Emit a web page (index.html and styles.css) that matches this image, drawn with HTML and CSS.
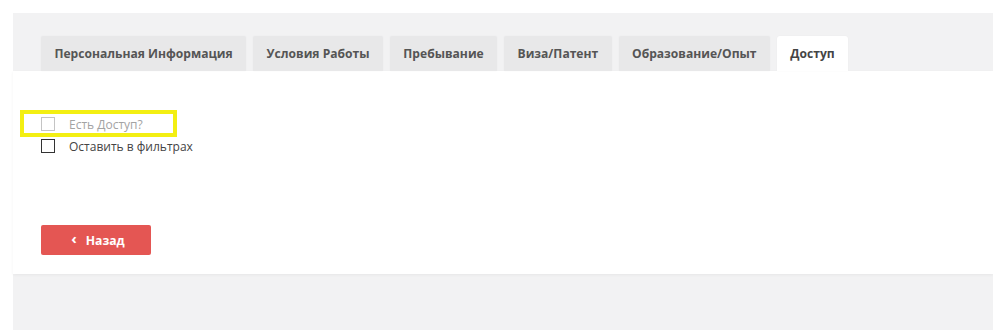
FILE: index.html
```html
<!DOCTYPE html>
<html lang="ru">
<head>
  <meta charset="UTF-8">
  <title>Доступ</title>
  <link rel="stylesheet" href="styles.css">
</head>
<body>
  <div class="page">
    <!-- Tabs -->
    <nav class="tabs">
      <span class="tab">Персональная Информация</span>
      <span class="tab">Условия Работы</span>
      <span class="tab">Пребывание</span>
      <span class="tab">Виза/Патент</span>
      <span class="tab">Образование/Опыт</span>
      <span class="tab active">Доступ</span>
    </nav>
    <!-- Access panel -->
    <section class="panel">
      <div class="checks">
        <label class="check highlight"><span class="box light"></span><span class="muted">Есть Доступ?</span></label>
        <label class="check"><span class="box"></span><span>Оставить в фильтрах</span></label>
      </div>
      <button class="btn-back"><span class="chev">&#8249;</span>Назад</button>
    </section>
  </div>
</body>
</html>
```

FILE: styles.css
```css
/* General */
body {
  margin: 0;
  background: #fff;
  font-family: "Open Sans", Arial, sans-serif;
  color: #555;
}

.page {
  margin: 13px 0 0 13px;
  background: #f2f2f3;
  height: 317px;
}

/* Tabs */
.tabs {
  display: flex;
  gap: 7px;
  padding: 23px 0 0 28px;
}

.tab {
  height: 35px;
  line-height: 35px;
  padding: 0 13.4px;
  background: #e8e8e9;
  font-size: 12.1px;
  font-weight: bold;
  color: #555;
  border-radius: 2px 2px 0 0;
  box-shadow: 0 0 2px rgba(0, 0, 0, 0.04);
}

.tab.active {
  background: #fff;
  color: #444;
  border-radius: 3px 3px 0 0;
}

/* Panel */
.panel {
  background: #fff;
  padding: 39px 28px 19px;
  box-shadow: 0 1px 3px rgba(0, 0, 0, 0.05);
}

.checks {
  display: flex;
  flex-direction: column;
  gap: 2px;
  font-size: 12px;
}

.check {
  display: flex;
  align-items: center;
  gap: 14px;
  height: 14px;
  color: #444;
}

.check.highlight {
  box-sizing: border-box;
  width: 157px;
  height: 27px;
  margin-left: -21px;
  padding: 1px 0 0 17px;
  border: 4px solid #f3ef12;
}

.box {
  width: 12px;
  height: 12px;
  border: 1px solid #333;
  background: #fff;
}

.box.light {
  border-color: #c4c4c4;
}

.muted {
  color: #a3a3a3;
}

/* Back button */
.btn-back {
  display: flex;
  align-items: center;
  justify-content: center;
  gap: 9px;
  margin-top: 72px;
  width: 110px;
  height: 30px;
  padding: 0 0 0 4px;
  background: #e45653;
  color: #fff;
  border: none;
  border-radius: 2px;
  font-family: "Open Sans", Arial, sans-serif;
  font-size: 12.2px;
  font-weight: bold;
}

.chev {
  font-size: 15px;
  line-height: 15px;
  margin-top: -3px;
}
```
